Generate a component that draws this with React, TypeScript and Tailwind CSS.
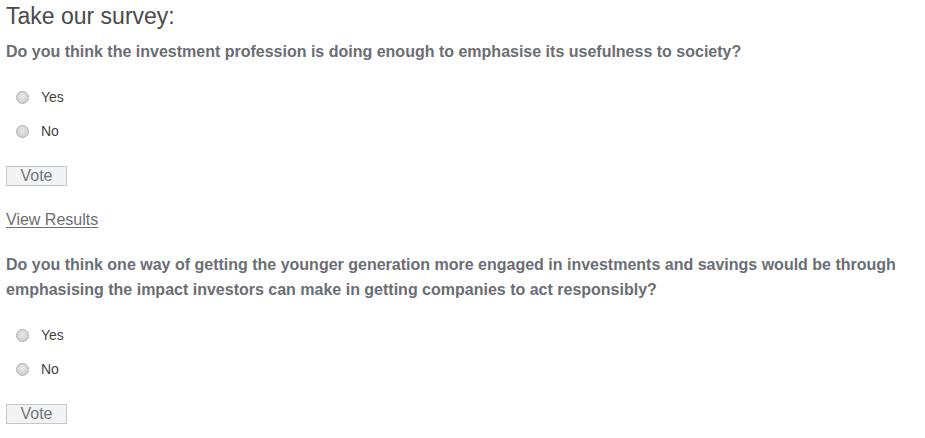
import React from "react";

const Radio = () => (
  <span className="inline-block w-[13px] h-[13px] rounded-full border border-[#b0b0b0] bg-[radial-gradient(circle_at_50%_40%,#e8e8e8,#c9c9c9)] shrink-0" />
);

const Option = ({ label }: { label: string }) => (
  <div className="flex items-center h-[34px]">
    <div className="w-[41px] pl-[16px] flex items-center">
      <Radio />
    </div>
    <span className="text-[14px] text-[#444]">{label}</span>
  </div>
);

const VoteButton = () => (
  <div className="w-[61px] h-[20px] border border-[#c8c8c8] bg-[#f1f3f5] flex items-center justify-center text-[16px] leading-none text-[#777]">
    Vote
  </div>
);

export default function App() {
  return (
    <div
      className="w-[925px] h-[438px] bg-white px-[6px] overflow-hidden"
      style={{ fontFamily: '"Liberation Sans", Arial, sans-serif' }}
    >
      <div className="text-[23px] leading-[30px] text-[#4a4a4a] pt-[1px]">Take our survey:</div>
      <div className="mt-[8px] text-[16px] font-bold leading-[25px] text-[#6b6e73]">
        Do you think the investment profession is doing enough to emphasise its usefulness to society?
      </div>
      <div className="mt-[16px] -ml-[6px]">
        <Option label="Yes" />
        <Option label="No" />
      </div>
      <div className="mt-[18px]">
        <VoteButton />
      </div>
      <div className="mt-[24px] text-[16px] leading-[20px] text-[#6e6e6e] underline underline-offset-2">
        View Results
      </div>
      <div className="mt-[22px] text-[16px] font-bold leading-[25px] text-[#6b6e73] w-[905px]">
        Do you think one way of getting the younger generation more engaged in investments and savings would be through emphasising the impact investors can make in getting companies to act responsibly?
      </div>
      <div className="mt-[16px] -ml-[6px]">
        <Option label="Yes" />
        <Option label="No" />
      </div>
      <div className="mt-[18px]">
        <VoteButton />
      </div>
    </div>
  );
}
